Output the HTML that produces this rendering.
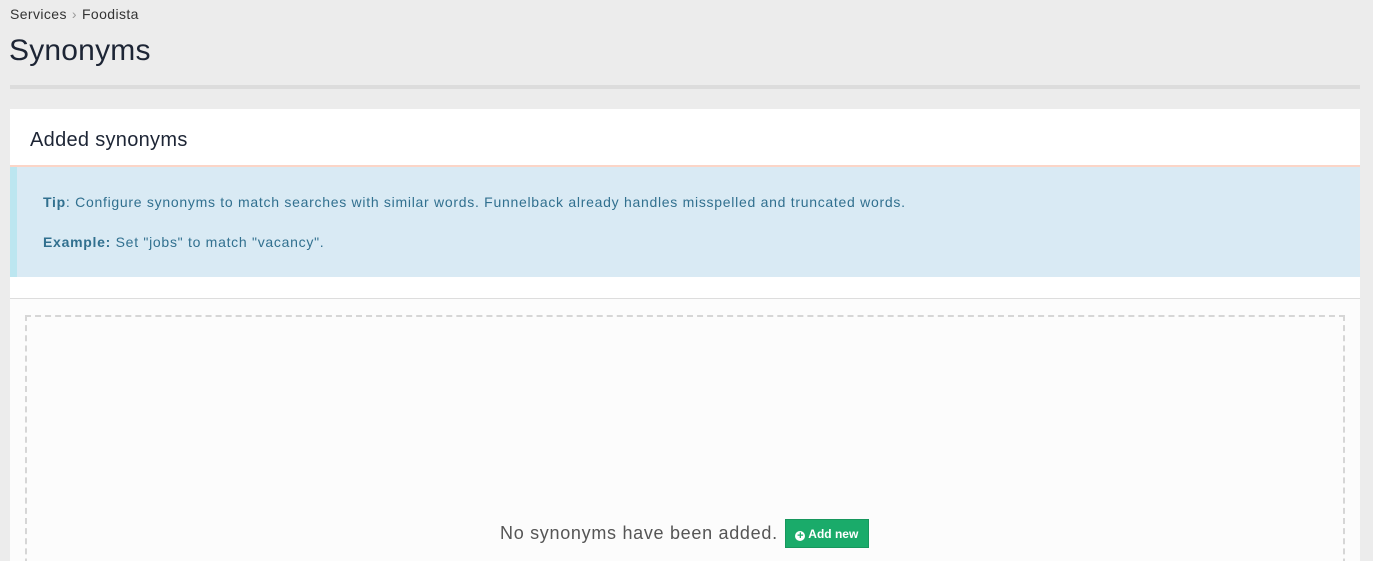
<!DOCTYPE html>
<html><head><style>
html,body{margin:0;width:1373px;height:561px;overflow:hidden}
body{background:#ececec;font-family:"Liberation Sans",sans-serif;position:relative}
.bc{position:absolute;left:10px;top:6px;font-size:14px;color:#333;letter-spacing:0.4px}
.bc span{color:#999;margin:0 5px}
h1{position:absolute;left:9px;top:34px;margin:0;font-size:30px;font-weight:normal;color:#1d2535;letter-spacing:0.2px}
.rule{position:absolute;left:10px;top:85px;width:1350px;height:4px;background:#dcdcdc}
.panel{position:absolute;left:10px;top:109px;width:1350px;height:452px;background:#fff;overflow:hidden}
.ph{border-bottom:2px solid #fbd5c7;font-size:20px;color:#1d2535;padding-left:20px;line-height:62px;box-sizing:border-box;height:58px;letter-spacing:0.3px}
.alert{height:110px;background:#d9eaf4;border-left:7px solid #bce6f0;color:#31708f;font-size:14px;position:relative;letter-spacing:0.72px}
.alert p{position:absolute;left:26px;margin:0;white-space:nowrap}
.sep{height:21px;border-bottom:1px solid #ddd}
.body{background:#fcfcfc;height:300px;position:relative}
.dash{position:absolute;left:15px;top:16px;width:1320px;height:280px;border:2px dashed #d6d6d6;border-bottom:none;box-sizing:border-box}
.empty{position:absolute;left:490px;top:220px;font-size:18px;color:#555;display:flex;align-items:center;white-space:nowrap;letter-spacing:0.7px}
.btn{margin-left:7px;background:#1aab6a;color:#fff;font-size:12px;font-weight:bold;height:29px;line-height:28px;border:1px solid #17975d;box-sizing:border-box;width:84px;text-align:center;letter-spacing:0;white-space:nowrap}
.btn b{display:inline-block;width:10px;height:10px;border-radius:50%;background:#fff;color:#1aab6a;font-size:11px;line-height:10px;text-align:center;vertical-align:-1px;margin-right:3px}
</style></head><body>
<div class="bc">Services<span>›</span>Foodista</div>
<h1>Synonyms</h1>
<div class="rule"></div>
<div class="panel">
<div class="ph">Added synonyms</div>
<div class="alert">
<p style="top:27px"><b>Tip</b>: Configure synonyms to match searches with similar words. Funnelback already handles misspelled and truncated words.</p>
<p style="top:67px"><b>Example:</b> Set "jobs" to match "vacancy".</p>
</div>
<div class="sep"></div>
<div class="body"><div class="dash"></div>
<div class="empty">No synonyms have been added.<div class="btn"><b>+</b>Add new</div></div>
</div>
</div>
</body></html>
